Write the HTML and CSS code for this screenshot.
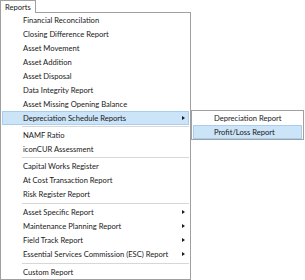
FILE: index.html
```html
<!DOCTYPE html>
<html>
<head>
<meta charset="utf-8">
<link rel="stylesheet" href="styles.css">
</head>
<body>
<div class="screen">
  <div class="menubar"><div class="tab">Reports</div></div>
  <div class="menu">
    <div class="item">Financial Reconcilation</div>
    <div class="item">Closing Difference Report</div>
    <div class="item">Asset Movement</div>
    <div class="item">Asset Addition</div>
    <div class="item">Asset Disposal</div>
    <div class="item">Data Integrity Report</div>
    <div class="item">Asset Missing Opening Balance</div>
    <div class="item active sub"><span>Depreciation Schedule Reports</span><i class="arrow"></i></div>
    <div class="sep"></div>
    <div class="item">NAMF Ratio</div>
    <div class="item">iconCUR Assessment</div>
    <div class="sep"></div>
    <div class="item">Capital Works Register</div>
    <div class="item">At Cost Transaction Report</div>
    <div class="item">Risk Register Report</div>
    <div class="sep wide"></div>
    <div class="item sub"><span>Asset Specific Report</span><i class="arrow"></i></div>
    <div class="item sub"><span>Maintenance Planning Report</span><i class="arrow"></i></div>
    <div class="item sub"><span>Field Track Report</span><i class="arrow"></i></div>
    <div class="item sub"><span>Essential Services Commission (ESC) Report</span><i class="arrow"></i></div>
    <div class="sep wide"></div>
    <div class="item">Custom Report</div>
  </div>
  <div class="submenu">
    <div class="item">Depreciation Report</div>
    <div class="item active">Profit/Loss Report</div>
  </div>
</div>
</body>
</html>
```

FILE: styles.css
```css
html, body {
  margin: 0;
  padding: 0;
  background: #ffffff;
}
.screen {
  position: relative;
  width: 305px;
  height: 280px;
  overflow: hidden;
  font-family: Lato, "Open Sans", sans-serif;
  font-size: 7.6px;
  color: #1a1a1a;
}
.menubar {
  height: 13px;
  display: flex;
}
.tab {
  width: 36px;
  height: 13px;
  border: 1px solid #a0a0a0;
  border-bottom: none;
  box-sizing: border-box;
  padding-left: 4px;
  line-height: 12px;
  background: #fff;
  position: relative;
  z-index: 2;
}
.menu {
  width: 191px;
  height: 268px;
  box-sizing: border-box;
  border: 1px solid #a0a0a0;
  background: #fff;
  margin-top: -1px;
  padding: 0 1px;
}
.item {
  height: 14px;
  line-height: 14px;
  padding-left: 21px;
  display: flex;
  align-items: center;
  box-sizing: border-box;
  white-space: nowrap;
}
.item.sub span {
  flex: 1;
}
.arrow {
  width: 0;
  height: 0;
  border-top: 2.5px solid transparent;
  border-bottom: 2.5px solid transparent;
  border-left: 3px solid #1a1a1a;
  margin-right: 4px;
}
.item.active {
  background: #cce4f7;
  outline: 1px solid #a9cdef;
  outline-offset: -1px;
}
.sep {
  height: 1px;
  margin: 1px 0 1px 20px;
  background: #d7d7d7;
}
.sep.wide {
  margin-top: 2px;
}
.submenu {
  position: absolute;
  left: 191px;
  top: 110px;
  width: 113px;
  box-sizing: border-box;
  border: 1px solid #a0a0a0;
  background: #fff;
  padding: 0 1px;
}
.submenu .item {
  padding-left: 21px;
}
```
